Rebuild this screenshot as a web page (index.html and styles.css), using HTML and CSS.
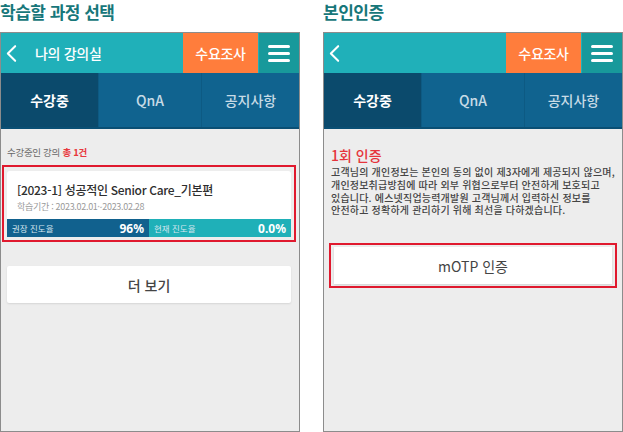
FILE: index.html
```html
<!DOCTYPE html>
<html lang="ko">
	<head>
		<meta charset="UTF-8" />
		<meta name="viewport" content="width=device-width, initial-scale=1.0" />
		<title>학습할 과정 선택 / 본인인증</title>
		<link rel="stylesheet" href="styles.css">
	</head>
	<body>
		<div class="screens">
			<section class="screen">
				<h2 class="screen-title">학습할 과정 선택</h2>
				<div class="phone">
					<header class="app-bar">
						<span class="back">
							<svg viewBox="0 0 12 20" fill="none" stroke="currentColor" stroke-width="2.2" stroke-linecap="round" stroke-linejoin="round">
								<polyline points="10,2 2,10 10,18"></polyline>
							</svg>
						</span>
						<span class="app-title">나의 강의실</span>
						<span class="survey">수요조사</span>
						<span class="menu"><i></i><i></i><i></i></span>
					</header>
					<nav class="tabs">
						<span class="tab active">수강중</span>
						<span class="tab">QnA</span>
						<span class="tab">공지사항</span>
					</nav>
					<div class="content">
						<p class="count">수강중인 강의 <strong>총 1건</strong></p>
						<div class="highlight">
							<div class="course">
								<div class="course-name">[2023-1] 성공적인 Senior Care_기본편</div>
								<div class="course-date">학습기간 : 2023.02.01~2023.02.28</div>
								<div class="progress">
									<div class="progress-item recommended">
										<span>권장 진도율</span>
										<b>96%</b>
									</div>
									<div class="progress-item current">
										<span>현재 진도율</span>
										<b>0.0%</b>
									</div>
								</div>
							</div>
						</div>
						<button class="more">더 보기</button>
					</div>
				</div>
			</section>

			<section class="screen">
				<h2 class="screen-title">본인인증</h2>
				<div class="phone">
					<header class="app-bar">
						<span class="back">
							<svg viewBox="0 0 12 20" fill="none" stroke="currentColor" stroke-width="2.2" stroke-linecap="round" stroke-linejoin="round">
								<polyline points="10,2 2,10 10,18"></polyline>
							</svg>
						</span>
						<span class="app-title"></span>
						<span class="survey">수요조사</span>
						<span class="menu"><i></i><i></i><i></i></span>
					</header>
					<nav class="tabs">
						<span class="tab active">수강중</span>
						<span class="tab">QnA</span>
						<span class="tab">공지사항</span>
					</nav>
					<div class="content auth">
						<h3 class="auth-title">1회 인증</h3>
						<p class="auth-text">
							<span>고객님의 개인정보는 본인의 동의 없이 제3자에게 제공되지 않으며,</span>
							<span>개인정보취급방침에 따라 외부 위협으로부터 안전하게 보호되고</span>
							<span>있습니다. 에스넷직업능력개발원 고객님께서 입력하신 정보를</span>
							<span>안전하고 정확하게 관리하기 위해 최선을 다하겠습니다.</span>
						</p>
						<div class="highlight otp">
							<button class="otp-button">mOTP 인증</button>
						</div>
					</div>
				</div>
			</section>
		</div>
	</body>
</html>
```

FILE: styles.css
```css
:root {
	--title-color: #17777a;
	--bar-teal: #20b0b9;
	--survey-orange: #ff7d3c;
	--menu-teal: #18999b;
	--tab-blue: #10638f;
	--tab-active: #0b4a6c;
	--page-bg: #ededed;
	--mark-red: #e0192e;
	--text-dark: #3a3a3a;
}
body {
	margin: 0;
	background-color: #fff;
	font-family: 'Noto Sans CJK KR', 'Noto Sans', sans-serif;
	color: var(--text-dark);
}
.screens {
	display: flex;
	gap: 23px;
	width: 623px;
}
.screen {
	width: 300px;
	display: flex;
	flex-direction: column;
}
.screen-title {
	margin: 0;
	height: 32px;
	font-size: 17px;
	line-height: 24px;
	font-weight: 700;
	color: var(--title-color);
	letter-spacing: -0.5px;
}
.phone {
	box-sizing: border-box;
	height: 400px;
	border: 1px solid #8c8c8c;
	background-color: var(--page-bg);
	display: flex;
	flex-direction: column;
	overflow: hidden;
}
.app-bar {
	display: flex;
	height: 40px;
	background-color: var(--bar-teal);
	color: #fff;
}
.back {
	display: flex;
	align-items: center;
	padding-left: 5px;
	width: 29px;
}
.back svg {
	width: 11px;
	height: 19px;
}
.app-title {
	flex-grow: 1;
	display: flex;
	align-items: center;
	font-size: 14px;
	font-weight: 500;
	letter-spacing: -0.3px;
}
.survey {
	width: 75px;
	display: flex;
	align-items: center;
	justify-content: center;
	background-color: var(--survey-orange);
	font-size: 14px;
	font-weight: 500;
	letter-spacing: -0.3px;
}
.menu {
	width: 40px;
	margin-left: 1px;
	display: flex;
	flex-direction: column;
	align-items: center;
	justify-content: center;
	gap: 4px;
	background-color: var(--menu-teal);
}
.menu i {
	display: block;
	width: 22px;
	height: 3px;
	border-radius: 2px;
	background-color: #fff;
}
.tabs {
	display: grid;
	grid-template-columns: 97px 103px 1fr;
	height: 54px;
	background-color: var(--tab-blue);
	border-bottom: 2px solid #0a4f74;
}
.tab {
	display: flex;
	align-items: center;
	justify-content: center;
	font-size: 14px;
	font-weight: 500;
	color: #c7dbe6;
	border-left: 1px solid #0d5a83;
}
.tab.active {
	background-color: var(--tab-active);
	color: #fff;
	font-weight: 700;
	border-left: none;
}
.content {
	padding: 16px 0 0;
	display: flex;
	flex-direction: column;
}
.count {
	margin: 0 0 6px 6px;
	font-size: 9.5px;
	line-height: 14px;
	color: #666;
	letter-spacing: -0.3px;
}
.count strong {
	color: #e8383d;
	font-weight: 700;
}
.highlight {
	margin: 0 3px 0 1px;
	padding: 4px 3px 3px;
	border: 2px solid var(--mark-red);
}
.course {
	background-color: #fff;
	border-radius: 3px 3px 0 0;
	padding-top: 11px;
}
.course-name {
	margin-left: 10px;
	font-size: 12px;
	line-height: 16px;
	font-weight: 500;
	color: #2e2e2e;
	letter-spacing: -0.3px;
}
.course-date {
	margin: 3px 0 6px 10px;
	font-size: 9px;
	line-height: 12px;
	color: #9a9a9a;
	letter-spacing: -0.3px;
}
.progress {
	display: flex;
	height: 18px;
	color: #fff;
}
.progress-item {
	flex: 1;
	display: flex;
	align-items: center;
	justify-content: space-between;
	padding: 0 5px;
}
.progress-item span {
	font-size: 8.5px;
	color: #d6e6ef;
}
.progress-item b {
	font-size: 12px;
	font-family: 'Noto Sans', sans-serif;
	font-weight: 700;
}
.recommended {
	background-color: #11618e;
}
.current {
	background-color: #1fb0b8;
}
.more {
	margin: 24px 8px 0 6px;
	height: 37px;
	border: none;
	border-radius: 2px;
	background-color: #fff;
	box-shadow: 0 1px 2px rgba(0, 0, 0, 0.1);
	font-family: inherit;
	font-size: 14px;
	font-weight: 500;
	color: #444;
}
.auth {
	padding: 17px 0 0 7px;
}
.auth-title {
	margin: 0 0 1px;
	font-size: 14px;
	line-height: 19px;
	font-weight: 500;
	color: #e6343c;
}
.auth-text {
	margin: 0;
	display: flex;
	flex-direction: column;
	font-size: 10px;
	line-height: 12.8px;
	font-weight: 500;
	color: #444;
	letter-spacing: 0.2px;
	white-space: nowrap;
}
.otp {
	margin: 26px 5px 0 -2px;
	padding: 2px 3px;
}
.otp-button {
	display: block;
	width: 100%;
	height: 37px;
	border: none;
	background-color: #fff;
	box-shadow: 0 1px 2px rgba(0, 0, 0, 0.12);
	font-family: inherit;
	font-size: 14px;
	color: #444;
}
```
